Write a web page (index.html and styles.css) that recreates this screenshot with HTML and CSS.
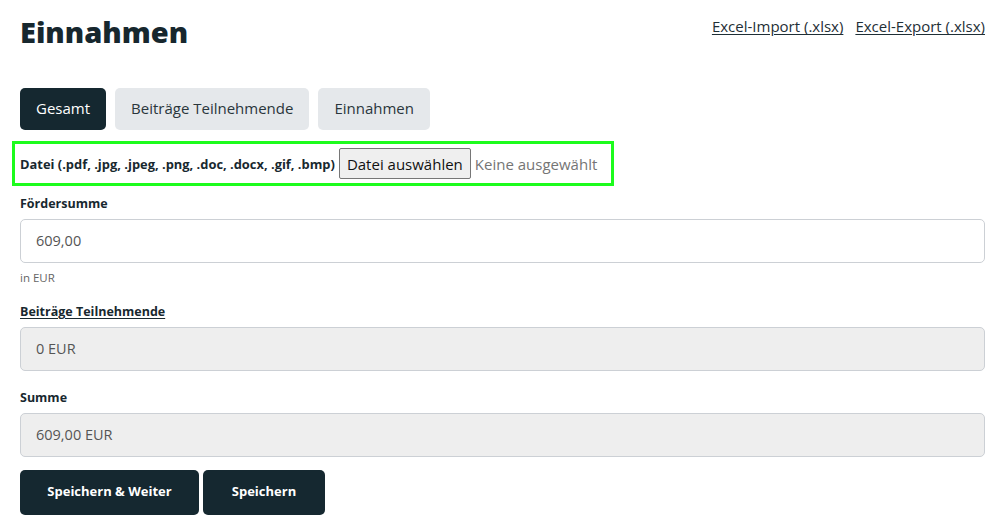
FILE: index.html
```html
<!DOCTYPE html>
<html lang="de">
<head>
<meta charset="utf-8">
<title>Einnahmen</title>
<link rel="stylesheet" href="styles.css">
</head>
<body>
<div class="page">
  <header class="head">
    <h1 class="title">Einnahmen</h1>
    <nav class="links">
      <a href="#" class="link">Excel-Import (.xlsx)</a>
      <a href="#" class="link">Excel-Export (.xlsx)</a>
    </nav>
  </header>

  <div class="tabs">
    <button class="tab tab-active">Gesamt</button>
    <button class="tab">Beiträge Teilnehmende</button>
    <button class="tab">Einnahmen</button>
  </div>

  <div class="upload">
    <span class="upload-label">Datei (.pdf, .jpg, .jpeg, .png, .doc, .docx, .gif, .bmp)</span>
    <span class="file-btn">Datei auswählen</span>
    <span class="file-none">Keine ausgewählt</span>
  </div>

  <div class="field">
    <div class="label">Fördersumme</div>
    <div class="input">609,00</div>
    <div class="hint">in EUR</div>
  </div>

  <div class="field">
    <div class="label label-link">Beiträge Teilnehmende</div>
    <div class="input input-disabled">0 EUR</div>
  </div>

  <div class="field">
    <div class="label">Summe</div>
    <div class="input input-disabled">609,00 EUR</div>
  </div>

  <div class="actions">
    <button class="btn btn-wide">Speichern &amp; Weiter</button>
    <button class="btn btn-save">Speichern</button>
  </div>
</div>
</body>
</html>
```

FILE: styles.css
```css
* { box-sizing: border-box; }
body {
  margin: 0;
  font-family: "Open Sans", "Noto Sans", sans-serif;
  color: #18282f;
  background: #fff;
}
.page {
  padding: 12px 21px 0 20px;
}
.head {
  display: flex;
  justify-content: space-between;
  align-items: flex-start;
}
.title {
  margin: 0;
  font-size: 29px;
  font-weight: 800;
  line-height: 40px;
  color: #17272e;
}
.links {
  display: flex;
  gap: 12px;
  padding-top: 4px;
}
.link {
  color: #1f2f36;
  font-size: 15px;
  text-decoration: underline;
  text-underline-offset: 2px;
}
.tabs {
  display: flex;
  gap: 9px;
  margin-top: 36px;
}
.tab {
  font-family: inherit;
  font-size: 15px;
  height: 42px;
  padding: 0 16px 3px;
  border: 0;
  border-radius: 5px;
  background: #e5e8eb;
  color: #2a363c;
  white-space: nowrap;
}
.tab-active {
  background: #152830;
  color: #fff;
}
.upload {
  display: inline-flex;
  align-items: center;
  margin: 11px 0 0 -8px;
  padding: 0 14px 0 5px;
  height: 45px;
  border: 3px solid #1dfc1d;
  gap: 4px;
}
.upload-label {
  font-size: 12.9px;
  font-weight: 700;
  white-space: nowrap;
}
.file-btn {
  display: inline-flex;
  align-items: center;
  height: 31px;
  padding: 0 7px;
  border: 1px solid #767676;
  border-radius: 2px;
  background: #efefef;
  font-size: 15px;
  color: #111;
  white-space: nowrap;
}
.file-none {
  font-size: 15px;
  color: #757575;
  white-space: nowrap;
}
.field {
  margin-top: 10px;
}
.field + .field {
  margin-top: 19px;
}
.label {
  font-size: 12.5px;
  font-weight: 700;
  line-height: 16px;
  margin-bottom: 7px;
}
.label-link {
  text-decoration: underline;
  text-underline-offset: 2px;
}
.input {
  height: 44px;
  border: 1px solid #ccd0d5;
  border-radius: 5px;
  padding: 0 15px 1px;
  display: flex;
  align-items: center;
  font-size: 14.5px;
  color: #555;
  background: #fff;
}
.input-disabled {
  background: #eeeeee;
}
.hint {
  font-size: 11.5px;
  color: #666;
  margin-top: 7px;
  margin-bottom: 5px;
}
.actions {
  display: flex;
  gap: 4px;
  margin-top: 13px;
}
.btn {
  font-family: inherit;
  font-size: 13px;
  font-weight: 700;
  height: 45px;
  padding: 0 0 3px;
  border: 0;
  border-radius: 5px;
  background: #152830;
  color: #fff;
  white-space: nowrap;
}
.btn-wide { width: 179px; }
.btn-save { width: 122px; }
```
